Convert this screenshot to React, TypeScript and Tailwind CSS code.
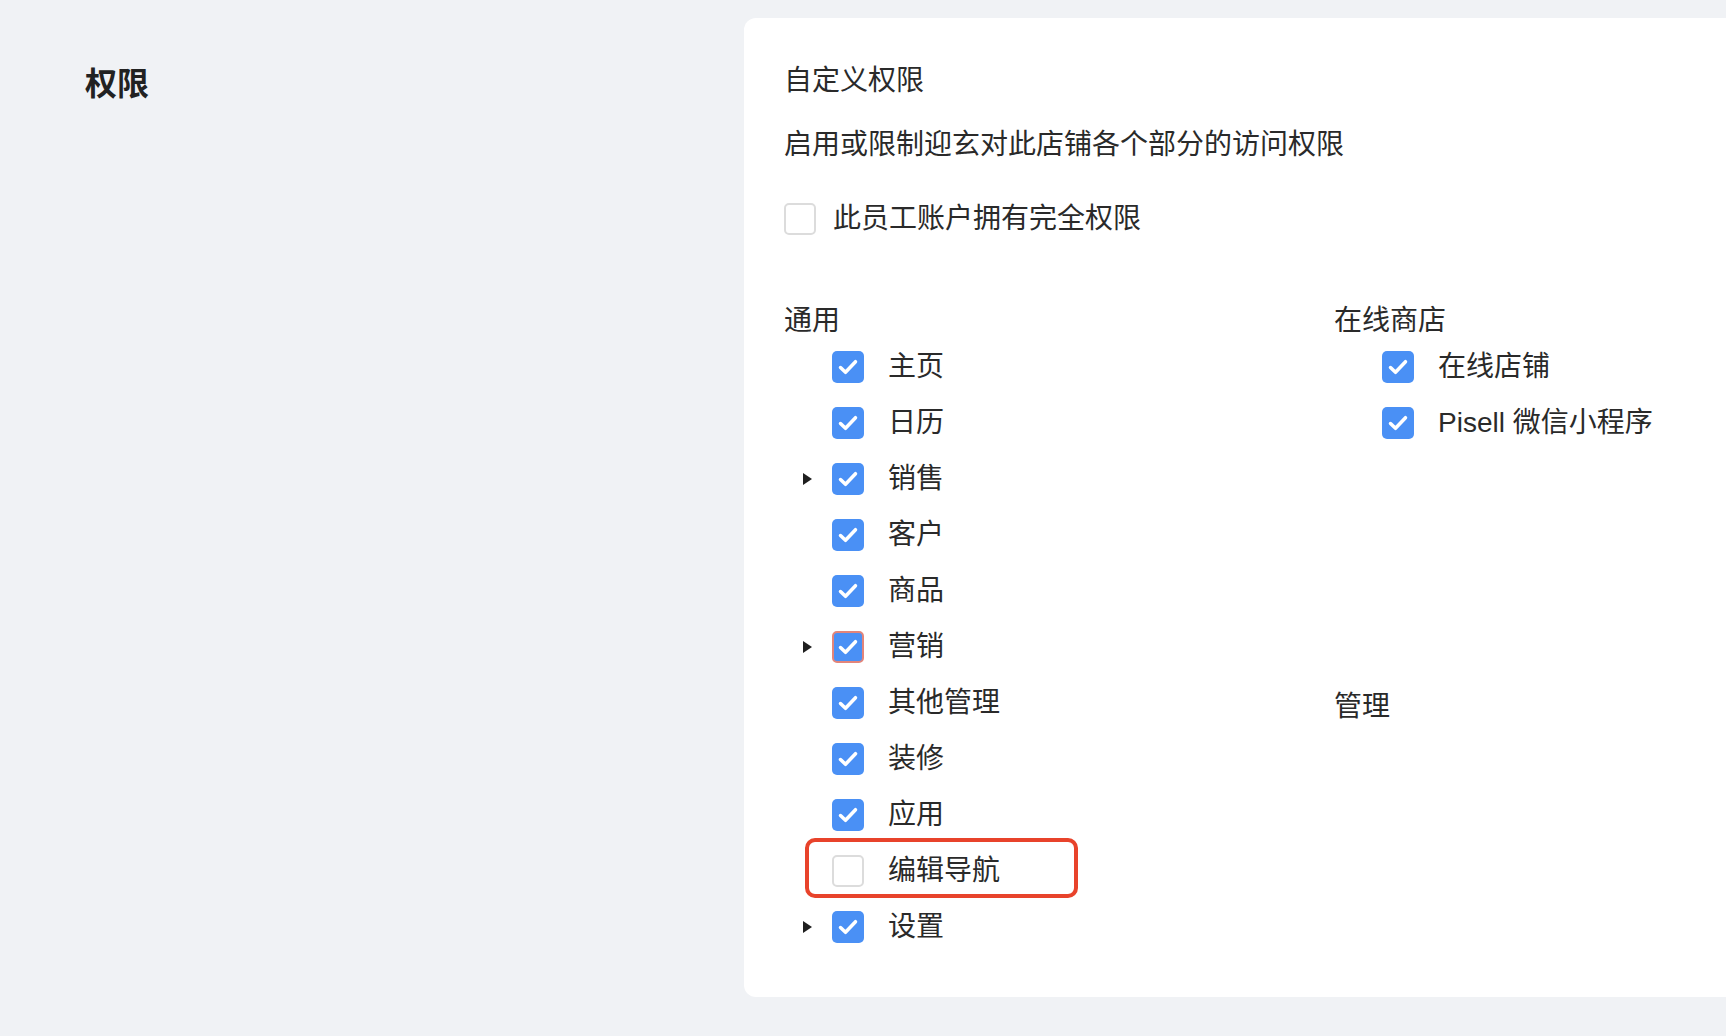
import React from "react";

type Item = {
  label: string;
  checked: boolean;
  caret?: boolean;
  focused?: boolean;
  highlight?: boolean;
};

const general: Item[] = [
  { label: "主页", checked: true },
  { label: "日历", checked: true },
  { label: "销售", checked: true, caret: true },
  { label: "客户", checked: true },
  { label: "商品", checked: true },
  { label: "营销", checked: true, caret: true, focused: true },
  { label: "其他管理", checked: true },
  { label: "装修", checked: true },
  { label: "应用", checked: true },
  { label: "编辑导航", checked: false, highlight: true },
  { label: "设置", checked: true, caret: true },
];

const onlineStore: Item[] = [
  { label: "在线店铺", checked: true },
  { label: "Pisell 微信小程序", checked: true },
];

function Checkbox({ checked, focused }: { checked: boolean; focused?: boolean }) {
  if (!checked) {
    return <span className="block h-8 w-8 shrink-0 rounded-[5px] border-2 border-[#dcdcdc] bg-white" />;
  }
  return (
    <span
      className={
        focused
          ? "flex h-8 w-8 shrink-0 items-center justify-center rounded-[5px] border-2 border-[#e3857a] bg-[#4a90f5]"
          : "flex h-8 w-8 shrink-0 items-center justify-center rounded-[5px] bg-[#4a90f5]"
      }
    >
      <svg width="28" height="28" viewBox="0 0 28 28" fill="none">
        <path d="M6.5 14.5 11.5 19.3 21.5 8.7" stroke="white" strokeWidth="3.5" strokeLinecap="round" strokeLinejoin="round" />
      </svg>
    </span>
  );
}

function Row({ item }: { item: Item }) {
  return (
    <div className="relative flex h-14 items-center">
      <div className="flex w-12 shrink-0 justify-end pr-5">
        {item.caret && (
          <svg width="9" height="12" viewBox="0 0 9 12">
            <path d="M0 0 9 6 0 12Z" fill="#1f1f1f" />
          </svg>
        )}
      </div>
      <Checkbox checked={item.checked} focused={item.focused} />
      <span className="ml-6 whitespace-nowrap leading-9">{item.label}</span>
      {item.highlight && (
        <div className="pointer-events-none absolute left-[21px] top-[-5px] h-[60px] w-[273px] rounded-[10px] border-[4px] border-[#e8432b]" />
      )}
    </div>
  );
}

export default function App() {
  return (
    <div className="flex min-h-screen bg-[#f0f2f5] font-['Liberation_Sans','Noto_Sans_CJK_SC',sans-serif] text-[28px] text-[#2a2a2a]">
      {/* left title */}
      <div className="w-[744px] shrink-0 pl-[85px] pt-[64px]">
        <h1 className="text-[32px] font-bold leading-10 text-[#222]">权限</h1>
      </div>

      {/* permissions card */}
      <div className="mt-[18px] h-[979px] flex-1 rounded-l-[12px] bg-white pl-10 pt-[45px]">
        <div className="leading-9">自定义权限</div>
        <div className="mt-7 leading-9">启用或限制迎玄对此店铺各个部分的访问权限</div>

        <div className="mt-[38px] flex h-9 items-center">
          <Checkbox checked={false} />
          <span className="ml-[17px] leading-9">此员工账户拥有完全权限</span>
        </div>

        <div className="mt-[66px] grid grid-cols-[550px_1fr]">
          <div>
            <div className="leading-9">通用</div>
            {general.map((item) => (
              <Row key={item.label} item={item} />
            ))}
          </div>

          <div>
            <div className="leading-9">在线商店</div>
            {onlineStore.map((item) => (
              <Row key={item.label} item={item} />
            ))}
            <div className="mt-[238px] leading-9">管理</div>
          </div>
        </div>
      </div>
    </div>
  );
}
